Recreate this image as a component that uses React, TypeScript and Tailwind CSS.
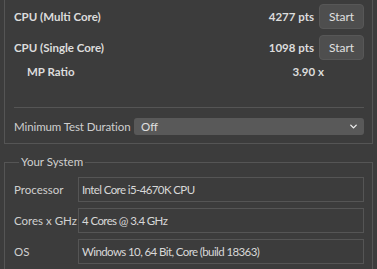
import { ChevronDown } from "lucide-react";

const font = { fontFamily: 'Lato, "Liberation Sans", sans-serif' };

type BenchRowProps = {
  label: string;
  score: string;
};

const BenchRow = ({ label, score }: BenchRowProps) => (
  <div className="flex h-[25px] items-center">
    <span className="flex-1 whitespace-nowrap text-[11.5px] font-bold text-[#dcdcdc]">{label}</span>
    <span className="whitespace-nowrap text-[11.5px] font-bold text-[#dcdcdc]">{score}</span>
    <button className="ml-[5px] h-[25px] w-[45px] rounded-[4px] border border-[#575757] bg-[#4e4e4e] text-[12px] text-[#e0e0e0]">
      Start
    </button>
  </div>
);

const InfoRow = ({ label, value }: { label: string; value: string }) => (
  <div className="flex h-[25px] items-center">
    <span className="w-[64px] shrink-0 whitespace-nowrap text-[11.5px] text-[#d0d0d0]">{label}</span>
    <div className="flex h-[25px] flex-1 items-center whitespace-nowrap border border-[#555] px-[3px] text-[11.5px] tracking-[-0.6px] text-[#d8d8d8]">
      {value}
    </div>
  </div>
);

export default function App() {
  return (
    <div className="h-[269px] w-[377px] overflow-hidden bg-[#3c3c3c]" style={font}>
      <div className="mx-[4px] border-x border-b border-[#555] pb-[8px] pl-[9px] pr-[8px] pt-[4px]">
        <div className="flex flex-col gap-[6px]">
          <BenchRow label="CPU (Multi Core)" score="4277 pts" />
          <BenchRow label="CPU (Single Core)" score="1098 pts" />
        </div>
        <div className="mt-[2px] flex h-[20px] items-center pl-[13px] pr-[40px]">
          <span className="flex-1 text-[11.5px] font-bold text-[#dcdcdc]">MP Ratio</span>
          <span className="text-[11.5px] font-bold text-[#dcdcdc]">3.90 x</span>
        </div>
        <div className="mt-[25px] h-px bg-[#555]" />
        <div className="mt-[10px] flex h-[17px] items-center">
          <span className="w-[120px] shrink-0 whitespace-nowrap text-[11.5px] tracking-[-0.1px] text-[#cfcfcf]">Minimum Test Duration</span>
          <div className="flex h-[17px] flex-1 items-center justify-between rounded-[3px] bg-[#595959] pl-[7px] pr-[5px] text-[11.5px] text-[#e0e0e0]">
            <span>Off</span>
            <ChevronDown size={11} strokeWidth={3} className="text-[#eee]" />
          </div>
        </div>
      </div>
      <fieldset className="mx-[4px] mt-[10px] border border-[#555] pb-[6px] pl-[9px] pr-[8px]">
        <legend className="ml-[5px] px-[2px] text-[11.5px] leading-[16px] text-[#d0d0d0]">Your System</legend>
        <div className="mt-[7px] flex flex-col gap-[6px]">
          <InfoRow label="Processor" value="Intel Core i5-4670K CPU" />
          <InfoRow label="Cores x GHz" value="4 Cores @ 3.4 GHz" />
          <InfoRow label="OS" value="Windows 10, 64 Bit, Core (build 18363)" />
        </div>
      </fieldset>
    </div>
  );
}
